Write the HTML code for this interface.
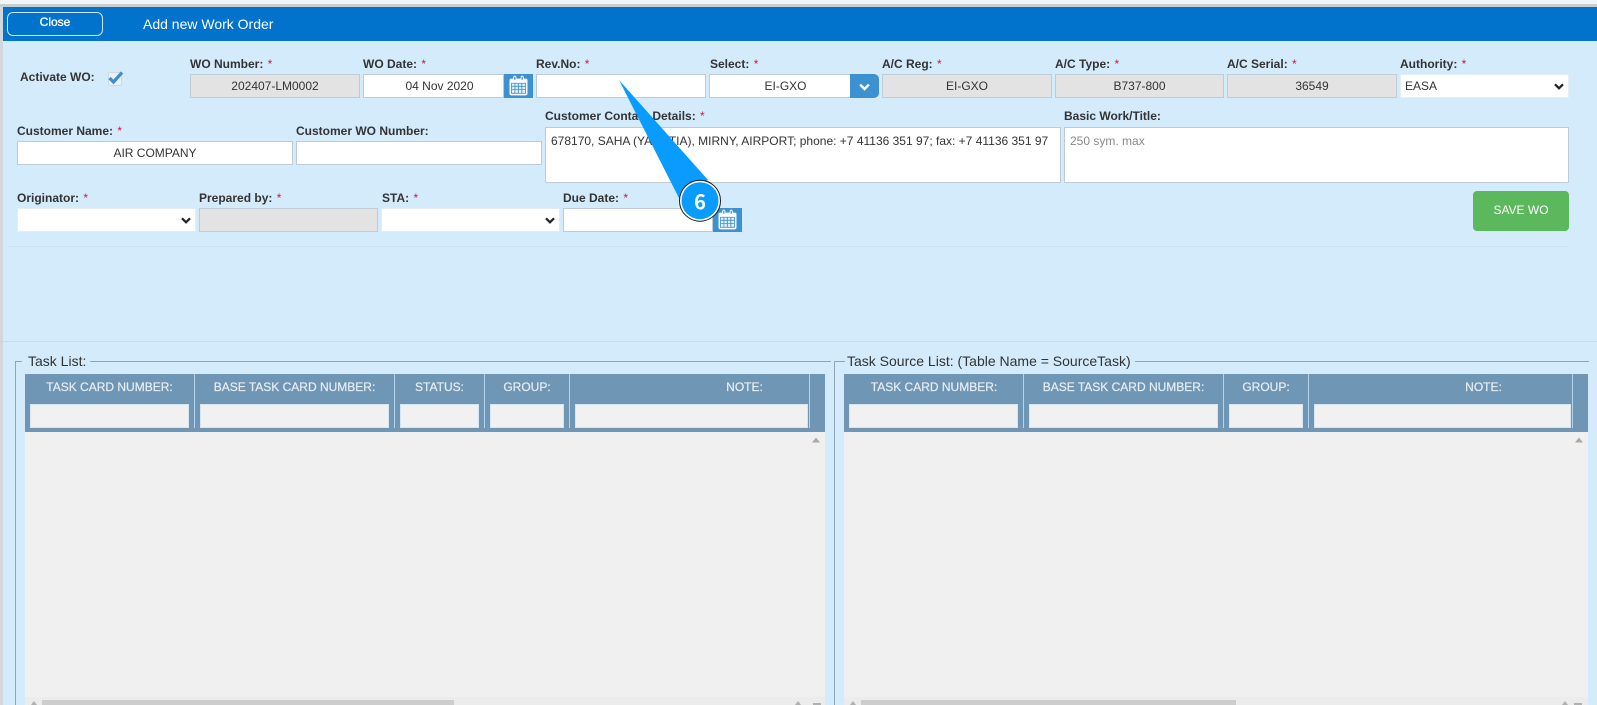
<!DOCTYPE html>
<html><head><meta charset="utf-8"><style>
html,body{margin:0;padding:0;width:1597px;height:705px;overflow:hidden;background:#d4ebfc;font-family:"Liberation Sans",sans-serif;font-size:12px;color:#333}
.a{position:absolute;box-sizing:border-box}
.l{position:absolute;font-weight:bold;font-size:12px;line-height:14px;color:#333;white-space:nowrap}
.l b{color:#d6133f;font-weight:normal;margin-left:1px}
.i{position:absolute;box-sizing:border-box;background:#fff;border:1px solid #bfcbd6;height:24px;top:74px;line-height:22px;text-align:center;font-size:12px;color:#333;white-space:nowrap}
.g{background:#e3e3e3}
.s{position:absolute;width:1px;top:374px;height:54px;background:#b5d4ec}
.f{position:absolute;box-sizing:border-box;top:404px;height:24px;background:#f1f1f1;border:1px solid #d6e6f2}
.h{position:absolute;top:380px;line-height:14px;color:#e6eef5;font-size:12px;font-weight:normal;transform:translateX(-50%);white-space:nowrap;-webkit-text-stroke:.2px #e6eef5}
</style></head><body>
<svg width="0" height="0" style="position:absolute"><defs>
<symbol id="cal" viewBox="0 0 18 19"><path fill="#fff" d="M.5 4.500q0-1.500 1.500-1.500h2V2q0-1.800 1.500-1.800T7 2v1h4V2q0-1.800 1.500-1.800T14 2v1h2q1.500 0 1.500 1.500V17q0 1.800-1.500 1.800H2Q.5 18.800.5 17z"/><path fill="#3c92d0" d="M2 7h14v10.300H2z"/><path fill="#e4f1fb" d="M2.800 7.700h2.400v2.200H2.800zM6 7.700h2.400v2.200H6zM9.300 7.700h2.400v2.200H9.300zM12.600 7.700h2.600v2.200h-2.600zM2.800 10.700h2.400v2.200H2.800zM6 10.700h2.400v2.200H6zM9.300 10.700h2.400v2.200H9.300zM12.600 10.700h2.600v2.200h-2.600zM2.800 13.700h2.400v2.800H2.800zM6 13.700h2.400v2.800H6zM9.300 13.700h2.400v2.800H9.300zM12.600 13.700h2.600v2.800h-2.600z"/><path fill="#3c92d0" d="M4.900 1.200h1.200V4H4.900zM11.900 1.200h1.200V4h-1.200z"/></symbol>
<symbol id="chev" viewBox="0 0 10 7"><path fill="none" stroke="currentColor" stroke-width="2.200" d="M1 1.300l4 4 4-4"/></symbol>
</defs></svg>

<div class="a" style="left:0;top:0;width:1597px;height:4px;background:#f1f5f8"></div>
<div class="a" style="left:0;top:4px;width:1597px;height:3px;background:#c9ced3"></div>
<div class="a" style="left:0;top:7px;width:3px;height:698px;background:#d3d7db"></div>
<div class="a" style="left:3px;top:7px;width:1594px;height:34px;background:#0173cc"></div>
<div class="a" style="left:7px;top:12px;width:96px;height:24px;border:1px solid #cfe6f8;border-radius:6px;color:#fff;text-align:center;line-height:19px;font-size:12px;-webkit-text-stroke:.3px #fff">Close</div>
<div class="a" style="left:143px;top:16px;color:#fff;font-size:14px;line-height:16px;white-space:nowrap">Add new Work Order</div>

<div class="l" style="left:20px;top:70px">Activate WO:</div>
<div class="a" style="left:108px;top:72px;width:14px;height:14px;background:#e8f2fa;border:1px solid #cfd9e2;border-radius:2px"></div>
<svg class="a" style="left:107px;top:70px" width="18" height="16" viewBox="0 0 18 16"><path fill="none" stroke="#3d8fd0" stroke-width="3.200" d="M2.500 8l4 4 8.500-9.500"/></svg>

<div class="l" style="left:190px;top:57px">WO Number: <b>*</b></div>
<div class="i g" style="left:190px;width:170px">202407-LM0002</div>
<div class="l" style="left:363px;top:57px">WO Date: <b>*</b></div>
<div class="i" style="left:363px;width:141px;padding-left:12px">04 Nov 2020</div>
<div class="a" style="left:504px;top:74px;width:29px;height:24px;background:#3c92d0"></div>
<svg class="a" style="left:509px;top:75px" width="19" height="21"><use href="#cal"/></svg>
<div class="l" style="left:536px;top:57px">Rev.No: <b>*</b></div>
<div class="i" style="left:536px;width:170px"></div>
<div class="l" style="left:710px;top:57px">Select: <b>*</b></div>
<div class="i" style="left:709px;width:142px;padding-left:11px">EI-GXO</div>
<div class="a" style="left:850px;top:74px;width:29px;height:24px;background:#3c92d0;border-radius:0 5px 5px 0;color:#fff"></div>
<svg class="a" style="left:859px;top:83px;color:#fff" width="11" height="8"><use href="#chev"/></svg>
<div class="l" style="left:882px;top:57px">A/C Reg: <b>*</b></div>
<div class="i g" style="left:882px;width:170px">EI-GXO</div>
<div class="l" style="left:1055px;top:57px">A/C Type: <b>*</b></div>
<div class="i g" style="left:1055px;width:169px">B737-800</div>
<div class="l" style="left:1227px;top:57px">A/C Serial: <b>*</b></div>
<div class="i g" style="left:1227px;width:170px">36549</div>
<div class="l" style="left:1400px;top:57px">Authority: <b>*</b></div>
<div class="i" style="left:1400px;width:169px;text-align:left;padding-left:4px;border-color:#e6eef5">EASA</div>
<svg class="a" style="left:1554px;top:83px;color:#222" width="10" height="7"><use href="#chev"/></svg>

<div class="l" style="left:17px;top:124px">Customer Name: <b>*</b></div>
<div class="i" style="left:17px;top:141px;width:276px">AIR COMPANY</div>
<div class="l" style="left:296px;top:124px">Customer WO Number:</div>
<div class="i" style="left:296px;top:141px;width:246px"></div>
<div class="l" style="left:545px;top:109px">Customer Contact Details: <b>*</b></div>
<div class="i" style="left:545px;top:127px;width:516px;height:56px;text-align:left;padding:6px 0 0 5px;line-height:14px">678170, SAHA (YAKUTIA), MIRNY, AIRPORT; phone: +7 41136 351 97; fax: +7 41136 351 97</div>
<div class="l" style="left:1064px;top:109px">Basic Work/Title:</div>
<div class="i" style="left:1064px;top:127px;width:505px;height:56px;text-align:left;padding:6px 0 0 5px;line-height:14px;color:#888">250 sym. max</div>

<div class="l" style="left:17px;top:191px">Originator: <b>*</b></div>
<div class="i" style="left:17px;top:208px;width:179px;border-color:#e2edf5"></div>
<svg class="a" style="left:181px;top:217px;color:#222" width="10" height="7"><use href="#chev"/></svg>
<div class="l" style="left:199px;top:191px">Prepared by: <b>*</b></div>
<div class="i g" style="left:199px;top:208px;width:179px"></div>
<div class="l" style="left:382px;top:191px">STA: <b>*</b></div>
<div class="i" style="left:381px;top:208px;width:179px;border-color:#e2edf5"></div>
<svg class="a" style="left:545px;top:217px;color:#222" width="10" height="7"><use href="#chev"/></svg>
<div class="l" style="left:563px;top:191px">Due Date: <b>*</b></div>
<div class="i" style="left:563px;top:208px;width:150px"></div>
<div class="a" style="left:713px;top:208px;width:29px;height:24px;background:#3c92d0"></div>
<svg class="a" style="left:718px;top:209px" width="19" height="21"><use href="#cal"/></svg>
<div class="a" style="left:1473px;top:191px;width:96px;height:40px;background:#5cb85c;border-radius:4px;color:#fff;text-align:center;line-height:39px;font-size:12px">SAVE WO</div>

<div class="a" style="left:8px;top:246px;width:1560px;height:1px;background:#cde2f2"></div>
<div class="a" style="left:3px;top:341px;width:1594px;height:1px;background:#c6dceb"></div>

<!-- Left fieldset -->
<div class="a" style="left:15px;top:361px;width:1px;height:344px;background:#8fa5b8"></div>
<div class="a" style="left:15px;top:361px;width:7px;height:1px;background:#8fa5b8"></div>
<div class="a" style="left:90px;top:361px;width:741px;height:1px;background:#8fa5b8"></div>
<div class="a" style="left:28px;top:353px;font-size:14px;line-height:16px;color:#333;white-space:nowrap">Task List:</div>
<div class="a" style="left:25px;top:374px;width:800px;height:58px;background:#7096b5"></div>
<div class="a" style="left:25px;top:432px;width:800px;height:273px;background:#f0f0f0"></div>
<div class="s" style="left:194px"></div><div class="s" style="left:394px"></div><div class="s" style="left:484px"></div><div class="s" style="left:569px"></div><div class="s" style="left:809px"></div>
<div class="f" style="left:30px;width:159px"></div><div class="f" style="left:200px;width:189px"></div><div class="f" style="left:400px;width:79px"></div><div class="f" style="left:490px;width:74px"></div><div class="f" style="left:575px;width:233px"></div>
<div class="h" style="left:109.500px">TASK CARD NUMBER:</div><div class="h" style="left:294.500px">BASE TASK CARD NUMBER:</div><div class="h" style="left:439.500px">STATUS:</div><div class="h" style="left:527px">GROUP:</div><div class="h" style="left:744.500px">NOTE:</div>
<svg class="a" style="left:812px;top:437px" width="8" height="6"><path fill="#a9a9a9" d="M4 .5L8 5.500H0z"/></svg>
<div class="a" style="left:25px;top:697px;width:800px;height:8px;background:#ececec"></div>
<div class="a" style="left:42px;top:700px;width:412px;height:5px;background:#cdcdcd"></div>
<svg class="a" style="left:31px;top:701px" width="6" height="4"><path fill="#b0b0b0" d="M3 0L6 4H0z"/></svg>
<svg class="a" style="left:795px;top:701px" width="6" height="4"><path fill="#b0b0b0" d="M3 0L6 4H0z"/></svg>
<div class="a" style="left:813px;top:703px;width:8px;height:2px;background:#b0b0b0"></div>

<!-- Right fieldset -->
<div class="a" style="left:834px;top:361px;width:1px;height:344px;background:#8fa5b8"></div>
<div class="a" style="left:834px;top:361px;width:11px;height:1px;background:#8fa5b8"></div>
<div class="a" style="left:1135px;top:361px;width:454px;height:1px;background:#8fa5b8"></div>
<div class="a" style="left:847px;top:353px;font-size:14px;line-height:16px;color:#333;white-space:nowrap">Task Source List: (Table Name = SourceTask)</div>
<div class="a" style="left:844px;top:374px;width:744px;height:58px;background:#7096b5"></div>
<div class="a" style="left:844px;top:432px;width:744px;height:273px;background:#f0f0f0"></div>
<div class="s" style="left:1023px"></div><div class="s" style="left:1223px"></div><div class="s" style="left:1308px"></div><div class="s" style="left:1572px"></div>
<div class="f" style="left:849px;width:169px"></div><div class="f" style="left:1029px;width:189px"></div><div class="f" style="left:1229px;width:74px"></div><div class="f" style="left:1314px;width:257px"></div>
<div class="h" style="left:934px">TASK CARD NUMBER:</div><div class="h" style="left:1123.500px">BASE TASK CARD NUMBER:</div><div class="h" style="left:1266px">GROUP:</div><div class="h" style="left:1483.500px">NOTE:</div>
<svg class="a" style="left:1575px;top:437px" width="8" height="6"><path fill="#a9a9a9" d="M4 .5L8 5.500H0z"/></svg>
<div class="a" style="left:844px;top:697px;width:744px;height:8px;background:#ececec"></div>
<div class="a" style="left:861px;top:700px;width:375px;height:5px;background:#cdcdcd"></div>
<svg class="a" style="left:850px;top:701px" width="6" height="4"><path fill="#b0b0b0" d="M3 0L6 4H0z"/></svg>
<svg class="a" style="left:1562px;top:701px" width="6" height="4"><path fill="#b0b0b0" d="M3 0L6 4H0z"/></svg>
<div class="a" style="left:1574px;top:703px;width:8px;height:2px;background:#b0b0b0"></div>

<!-- Callout -->
<svg class="a" style="left:600px;top:70px;overflow:visible" width="140" height="160">
<path fill="#0a9bff" d="M19 10L80 130 108 110z"/>
<circle cx="100" cy="130.700" r="20.500" fill="#fff"/>
<circle cx="100" cy="130.700" r="20.500" fill="none" stroke="#1a1a1a" stroke-width="1"/>
<circle cx="100" cy="130.700" r="18.500" fill="#0a9bff"/>
<text x="100" y="139" text-anchor="middle" font-family="Noto Sans CJK JP, sans-serif" font-weight="bold" font-size="20" fill="#fff">6</text>
</svg>
</body></html>
